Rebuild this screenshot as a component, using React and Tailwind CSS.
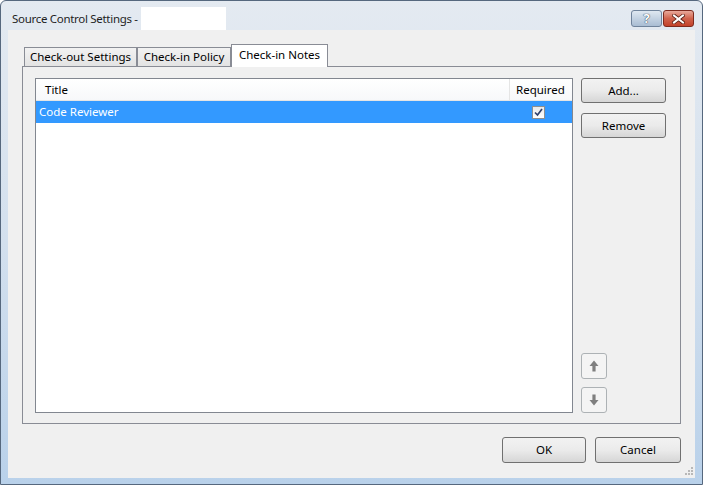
import React from 'react';

const btn =
  'flex items-center justify-center rounded-[3px] border border-[#707070] bg-gradient-to-b from-[#f2f2f2] via-[#ebebeb] to-[#d6d6d6] text-black';

const Checkbox = () => (
  <div className="w-[13px] h-[13px] border border-[#8e8f8f] bg-gradient-to-b from-[#eaeaea] to-[#ffffff] flex items-center justify-center">
    <svg width="9" height="9" viewBox="0 0 9 9">
      <path d="M1 4.5 L3.5 7 L8 1" fill="none" stroke="#31406b" strokeWidth="1.7" />
    </svg>
  </div>
);

const ArrowButton = ({ down }) => (
  <div className="w-[26px] h-[26px] rounded-[3px] border border-[#adb2b5] bg-[#f4f4f4] flex items-center justify-center">
    <svg width="10" height="12" viewBox="0 0 10 12" className={down ? 'rotate-180' : ''}>
      <path d="M5 0.5 L9.5 6 L6.6 6 L6.6 11.5 L3.4 11.5 L3.4 6 L0.5 6 Z" fill="#7f7f7f" />
    </svg>
  </div>
);

const Tab = ({ label, width, active }) =>
  active ? (
    <div
      className={`${width} h-[23px] -mb-px relative z-10 bg-white border border-b-0 border-[#898c95] flex items-center justify-center leading-none pb-[2px]`}
    >
      {label}
    </div>
  ) : (
    <div
      className={`${width} h-[19px] bg-gradient-to-b from-[#f2f2f2] to-[#e3e3e3] border border-b-0 border-[#898c95] flex items-center justify-center leading-none`}
    >
      {label}
    </div>
  );

export default function App() {
  return (
    <div className="w-[703px] h-[485px] flex flex-col rounded-t-[6px] border border-[#56687e] bg-gradient-to-b from-[#e4eaf1] via-[#d3e0ee] to-[#b9d1ea] font-['Noto_Sans',sans-serif] text-[11.5px] text-black overflow-hidden">
      {/* title bar */}
      <div className="h-[29px] flex items-start pl-[11px] pr-[8px]">
        <span className="w-[129px] mt-[8px] leading-[20px] text-[11.5px] text-[#1e1e1e] whitespace-nowrap tracking-[-0.3px]">
          Source Control Settings -
        </span>
        <div className="w-[85px] h-[23px] mt-[6px] bg-white" />
        <div className="ml-auto mt-[9px] flex gap-px">
          <div className="w-[31px] h-[17px] rounded-[3px] border border-[#6f839b] bg-gradient-to-b from-[#dfe8f1] via-[#c3d2e2] to-[#a9bdd3] flex items-center justify-center">
            <span className="text-white font-bold text-[13px] leading-none [text-shadow:0_0_1px_#2b3a4d,0_0_1px_#2b3a4d]">
              ?
            </span>
          </div>
          <div className="w-[31px] h-[17px] rounded-[3px] border border-[#7d2a1e] bg-gradient-to-b from-[#e8a99b] via-[#d0634d] to-[#c2412a] flex items-center justify-center">
            <svg width="13" height="10" viewBox="0 0 13 10">
              <path d="M2 1.5 L11 8.5 M11 1.5 L2 8.5" stroke="#5a1f15" strokeWidth="3.6" strokeLinecap="square" />
              <path d="M2 1.5 L11 8.5 M11 1.5 L2 8.5" stroke="#ffffff" strokeWidth="2" strokeLinecap="square" />
            </svg>
          </div>
        </div>
      </div>

      {/* client area */}
      <div className="relative flex-1 ml-[7px] mr-[7px] mb-[6px] bg-[#f0f0f0] flex flex-col pt-[14px] pl-[14px] pr-[14px] pb-[15px]">
        <div className="h-[22px] flex items-end pl-[2px]">
          <Tab label="Check-out Settings" width="w-[113px]" />
          <Tab label="Check-in Policy" width="w-[94px]" />
          <Tab label="Check-in Notes" width="w-[97px]" active />
        </div>

        <div className="h-[358px] border border-[#898c95] bg-[#f0f0f0] flex gap-[8px] pt-[11px] pl-[12px] pr-[14px] pb-[10px]">
          {/* list view */}
          <div className="flex-1 border border-[#828790] bg-white flex flex-col">
            <div className="h-[22px] flex border-b border-[#e5e5e5] bg-gradient-to-b from-white to-[#f7f8fa]">
              <div className="flex-1 flex items-center pl-[9px] border-r border-[#e5e5e5]">Title</div>
              <div className="w-[62px] flex items-center pl-[6px]">Required</div>
            </div>
            <div className="h-[22px] flex bg-[#3399ff] text-white">
              <div className="flex-1 flex items-center pl-[3px]">Code Reviewer</div>
              <div className="w-[62px] flex items-center pl-[22px]">
                <Checkbox />
              </div>
            </div>
          </div>

          {/* side buttons */}
          <div className="w-[85px] flex flex-col">
            <div className={`${btn} h-[25px]`}>Add...</div>
            <div className={`${btn} h-[25px] mt-[10px]`}>Remove</div>
            <div className="mt-auto flex flex-col gap-[8px]">
              <ArrowButton />
              <ArrowButton down />
            </div>
          </div>
        </div>

        {/* dialog buttons */}
        <div className="mt-[13px] flex justify-end gap-[9px]">
          <div className={`${btn} w-[84px] h-[26px] border-[#3c7fb1] from-[#eef5fa] via-[#e4eef6] to-[#cfdde9]`}>OK</div>
          <div className={`${btn} w-[86px] h-[26px]`}>Cancel</div>
        </div>

        {/* size grip */}
        <svg className="absolute right-[2px] bottom-[2px]" width="10" height="10" viewBox="0 0 10 10">
          {[
            [8, 0], [8, 3], [5, 3], [8, 6], [5, 6], [2, 6],
          ].map(([x, y], i) => (
            <rect key={i} x={x} y={y + 1} width="2" height="2" fill="#b8b8b8" />
          ))}
        </svg>
      </div>
    </div>
  );
}
